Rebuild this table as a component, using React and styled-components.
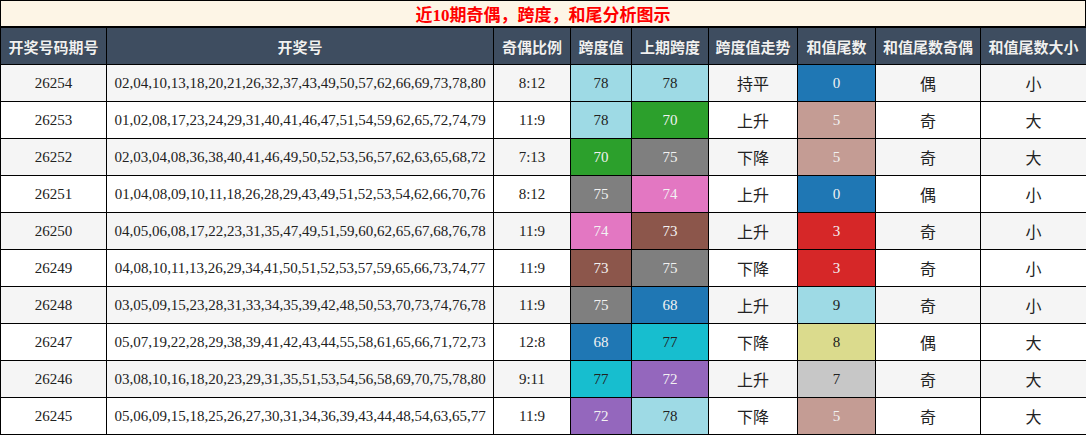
import React from 'react';
import styled, { createGlobalStyle } from 'styled-components';

const GlobalStyle = createGlobalStyle`
  body {
    margin: 0;
    background: #fff;
    font-family: "Liberation Serif", "Noto Sans CJK SC", serif;
  }
`;

// 配色
const spanColors = {
  78: ['#9edae5', '#222'],
  70: ['#2ca02c', '#f2f2f2'],
  75: ['#7f7f7f', '#f2f2f2'],
  74: ['#e377c2', '#f2f2f2'],
  73: ['#8c564b', '#f2f2f2'],
  68: ['#1f77b4', '#f2f2f2'],
  77: ['#17becf', '#222'],
  72: ['#9467bd', '#f2f2f2'],
};

const tailColors = {
  0: ['#1f77b4', '#f2f2f2'],
  5: ['#c49c94', '#f2f2f2'],
  3: ['#d62728', '#f2f2f2'],
  9: ['#9edae5', '#222'],
  8: ['#dbdb8d', '#222'],
  7: ['#c7c7c7', '#222'],
};

const rows = [
  ['26254', '02,04,10,13,18,20,21,26,32,37,43,49,50,57,62,66,69,73,78,80', '8:12', 78, 78, '持平', 0, '偶', '小'],
  ['26253', '01,02,08,17,23,24,29,31,40,41,46,47,51,54,59,62,65,72,74,79', '11:9', 78, 70, '上升', 5, '奇', '大'],
  ['26252', '02,03,04,08,36,38,40,41,46,49,50,52,53,56,57,62,63,65,68,72', '7:13', 70, 75, '下降', 5, '奇', '大'],
  ['26251', '01,04,08,09,10,11,18,26,28,29,43,49,51,52,53,54,62,66,70,76', '8:12', 75, 74, '上升', 0, '偶', '小'],
  ['26250', '04,05,06,08,17,22,23,31,35,47,49,51,59,60,62,65,67,68,76,78', '11:9', 74, 73, '上升', 3, '奇', '小'],
  ['26249', '04,08,10,11,13,26,29,34,41,50,51,52,53,57,59,65,66,73,74,77', '11:9', 73, 75, '下降', 3, '奇', '小'],
  ['26248', '03,05,09,15,23,28,31,33,34,35,39,42,48,50,53,70,73,74,76,78', '11:9', 75, 68, '上升', 9, '奇', '小'],
  ['26247', '05,07,19,22,28,29,38,39,41,42,43,44,55,58,61,65,66,71,72,73', '12:8', 68, 77, '下降', 8, '偶', '大'],
  ['26246', '03,08,10,16,18,20,23,29,31,35,51,53,54,56,58,69,70,75,78,80', '9:11', 77, 72, '上升', 7, '奇', '大'],
  ['26245', '05,06,09,15,18,25,26,27,30,31,34,36,39,43,44,48,54,63,65,77', '11:9', 72, 78, '下降', 5, '奇', '大'],
];

const headers = ['开奖号码期号', '开奖号', '奇偶比例', '跨度值', '上期跨度', '跨度值走势', '和值尾数', '和值尾数奇偶', '和值尾数大小'];
const widths = [106, 387, 77, 61, 77, 89, 78, 105, 106];

const Wrap = styled.div`
  width: 1086px;
`;

const Title = styled.div`
  height: 25px;
  border: 1px solid #000;
  background: #fdf5e6;
  color: #f00;
  font-weight: bold;
  font-size: 17px;
  display: flex;
  align-items: center;
  justify-content: center;
`;

const Table = styled.table`
  width: 1086px;
  table-layout: fixed;
  border-collapse: collapse;
  border: 1px solid #000;
`;

const Th = styled.th`
  height: 36px;
  padding: 0;
  background: #3e4d60;
  color: #f0f0f0;
  font-size: 15px;
  font-weight: bold;
  border: 1px solid #000;
  text-shadow: 0 0 1px rgba(0, 0, 0, 0.4);
`;

const Tr = styled.tr`
  background: ${p => (p.$odd ? '#f5f5f5' : '#fff')};
`;

const Td = styled.td`
  height: 36px;
  padding: 0;
  text-align: center;
  border: 1px solid #000;
  font-size: ${p => (p.$cjk ? '16px' : '15px')};
  background: ${p => p.$bg || 'transparent'};
  color: ${p => p.$fg || '#222'};
  white-space: nowrap;
`;

export default function App() {
  return (
    <Wrap>
      <GlobalStyle />
      <Title>近10期奇偶，跨度，和尾分析图示</Title>
      <Table>
        <colgroup>
          {widths.map((w, i) => (
            <col key={i} style={{ width: w }} />
          ))}
        </colgroup>
        <thead>
          <tr>
            {headers.map(h => (
              <Th key={h}>{h}</Th>
            ))}
          </tr>
        </thead>
        <tbody>
          {rows.map((r, i) => {
            const [issue, nums, ratio, span, prev, trend, tail, oe, bs] = r;
            return (
              <Tr key={issue} $odd={i % 2 === 0}>
                <Td>{issue}</Td>
                <Td>{nums}</Td>
                <Td>{ratio}</Td>
                <Td $bg={spanColors[span][0]} $fg={spanColors[span][1]}>{span}</Td>
                <Td $bg={spanColors[prev][0]} $fg={spanColors[prev][1]}>{prev}</Td>
                <Td $cjk>{trend}</Td>
                <Td $bg={tailColors[tail][0]} $fg={tailColors[tail][1]}>{tail}</Td>
                <Td $cjk>{oe}</Td>
                <Td $cjk>{bs}</Td>
              </Tr>
            );
          })}
        </tbody>
      </Table>
    </Wrap>
  );
}
